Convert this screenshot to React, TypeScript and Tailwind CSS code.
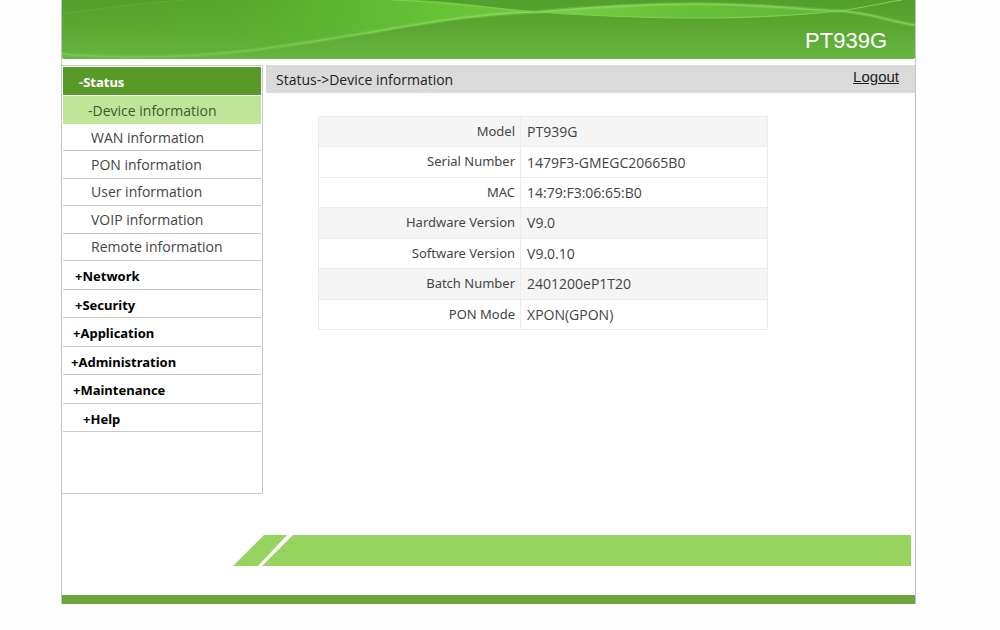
import React from 'react';
import clsx from 'clsx';

type MenuItem = { label: string; indent: string };

const statusPages = ['WAN information', 'PON information', 'User information', 'VOIP information', 'Remote information'];

const sections: MenuItem[] = [
  { label: '+Network', indent: 'pl-3' },
  { label: '+Security', indent: 'pl-3' },
  { label: '+Application', indent: 'pl-2.5' },
  { label: '+Administration', indent: 'pl-2' },
  { label: '+Maintenance', indent: 'pl-2.5' },
  { label: '+Help', indent: 'pl-5' },
];

const deviceInfo = [
  { name: 'Model', value: 'PT939G', shaded: true },
  { name: 'Serial Number', value: '1479F3-GMEGC20665B0', shaded: false },
  { name: 'MAC', value: '14:79:F3:06:65:B0', shaded: false },
  { name: 'Hardware Version', value: 'V9.0', shaded: true },
  { name: 'Software Version', value: 'V9.0.10', shaded: false },
  { name: 'Batch Number', value: '2401200eP1T20', shaded: true },
  { name: 'PON Mode', value: 'XPON(GPON)', shaded: false },
];

const lowerCrest =
  'M0 54 C20 56 45 57 78 57 C160 57 225 46 298 34 C370 22 420 13 475 12 C530 7 580 4 635 4 C705 4 740 10 779 11 C810 13 830 22 853 25';

function HeaderWaves() {
  return (
    <svg className="absolute inset-0 h-full w-full" viewBox="0 0 853 59" preserveAspectRatio="none" aria-hidden="true">
      <defs>
        <linearGradient id="base" x1="0" y1="0" x2="0" y2="1">
          <stop offset="0" stopColor="#539f2b" />
          <stop offset="0.5" stopColor="#5ba732" />
          <stop offset="1" stopColor="#6ab643" />
        </linearGradient>
        <linearGradient id="swell" gradientUnits="userSpaceOnUse" x1="0" y1="0" x2="475" y2="0">
          <stop offset="0" stopColor="#5cb031" stopOpacity="0" />
          <stop offset="0.35" stopColor="#5cb031" stopOpacity="0.4" />
          <stop offset="0.6" stopColor="#60bb34" stopOpacity="0.85" />
          <stop offset="0.8" stopColor="#66c436" />
          <stop offset="1" stopColor="#6fc640" />
        </linearGradient>
        <linearGradient id="lens" x1="0" y1="0" x2="1" y2="0">
          <stop offset="0" stopColor="#78cf48" />
          <stop offset="0.5" stopColor="#66c038" />
          <stop offset="1" stopColor="#64b63a" />
        </linearGradient>
        <linearGradient id="crest" gradientUnits="userSpaceOnUse" x1="0" y1="0" x2="853" y2="0">
          <stop offset="0" stopColor="#7cc755" />
          <stop offset="0.2" stopColor="#75c44c" />
          <stop offset="0.55" stopColor="#88d85b" />
          <stop offset="1" stopColor="#7dcb54" />
        </linearGradient>
      </defs>
      <rect width="853" height="59" fill="url(#base)" />
      <path
        d="M0 14 C45 8 80 3 122 0 H355 C400 2 435 9 475 12 C420 13 370 22 298 34 C225 46 160 57 78 57 C45 57 20 56 0 53 Z"
        fill="url(#swell)"
      />
      <path d="M475 12 C530 7 580 4 635 4 C700 4 745 10 779 11 C735 16 690 18 640 18 C575 18 520 15 475 12 Z" fill="url(#lens)" />
      <path d="M0 14 C45 8 80 3 122 0" fill="none" stroke="#5fac39" strokeWidth="1" />
      <path d={lowerCrest} fill="none" stroke="url(#crest)" strokeOpacity="0.35" strokeWidth="4" />
      <path d={lowerCrest} fill="none" stroke="url(#crest)" strokeWidth="1.5" />
      <path
        d="M330 0 C390 2 435 9 475 12 C520 15 575 18 640 18 C700 18 740 15 779 11 C805 7 825 2 840 0"
        fill="none"
        stroke="#7dcf50"
        strokeWidth="1.2"
      />
    </svg>
  );
}

function Sidebar() {
  return (
    <nav className="h-[429px] w-[201px] shrink-0 border-r border-b border-t border-[#c9c9c9] p-px text-[14px]">
      <button
        type="button"
        className="block h-7 w-full bg-[#589a28] pt-1 pl-4 text-left font-['Noto_Sans',sans-serif] text-[13px] font-bold text-white"
      >
        -Status
      </button>
      <a href="#device" className="mt-px flex h-7 items-center bg-[#bfe599] pl-[25px] text-[#3c5a31]">
        -Device information
      </a>
      <div className="grid h-[137px] auto-rows-fr">
        {statusPages.map((page) => (
          <a key={page} href="#status" className="flex items-center border-b border-[#c9c9c9] pl-7 text-[#444]">
            {page}
          </a>
        ))}
      </div>
      <div className="grid h-[171px] auto-rows-fr font-['Noto_Sans',sans-serif] text-[13px]">
        {sections.map((s) => (
          <button
            key={s.label}
            type="button"
            className={clsx('flex items-center border-b border-[#c9c9c9] pt-1 text-left font-bold text-black', s.indent)}
          >
            {s.label}
          </button>
        ))}
      </div>
    </nav>
  );
}

function DeviceTable() {
  return (
    <table className="mt-[23px] mr-[147px] ml-[52px] h-[214px] w-[calc(100%-199px)] table-fixed border-collapse border border-[#ebebeb] text-[#444]">
      <tbody>
        {deviceInfo.map((row) => (
          <tr key={row.name} className={clsx('border-b border-[#ebebeb]', row.shaded && 'bg-[#f5f5f5]')}>
            <th
              scope="row"
              className="w-[45%] border-r border-[#ebebeb] pr-[5px] text-right font-['Noto_Sans',sans-serif] text-[13px] font-normal"
            >
              {row.name}
            </th>
            <td className="pl-1.5 text-[14px]">{row.value}</td>
          </tr>
        ))}
      </tbody>
    </table>
  );
}

export default function App() {
  return (
    <div className="min-h-screen bg-[#fdfdfd] font-['Open_Sans','Noto_Sans',sans-serif]">
      <div className="mr-[84px] ml-[61px] border-x border-[#c4c4c4] bg-white">
        <header className="relative flex h-[59px] items-end justify-end overflow-hidden rounded-b-xs">
          <HeaderWaves />
          <h1 className="relative pr-7 pb-0.5 font-['Liberation_Sans',Arial,sans-serif] text-[22px] text-white">PT939G</h1>
        </header>
        <div className="mt-1.5 flex">
          <Sidebar />
          <main className="ml-[3px] flex-1">
            <div className="flex h-7 items-center justify-between bg-[#dadada] pr-4 pl-[10px] text-[14px] text-[#222]">
              <span>Status-&gt;Device information</span>
              <a href="#logout" className="pb-1 font-['Liberation_Sans',Arial,sans-serif] text-[15px] underline">
                Logout
              </a>
            </div>
            <DeviceTable />
          </main>
        </div>
        <footer className="pt-[41px]">
          <div className="mr-1 ml-[171px] flex h-[31px]">
            <svg className="h-full w-[60px] shrink-0" viewBox="0 0 60 31" aria-hidden="true">
              <path d="M31 0 H54 L25 31 H0 Z M60 0 L29 31 H60 Z" fill="#96d35f" />
            </svg>
            <div className="flex-1 bg-[#96d35f]" />
          </div>
          <div className="mt-[29px] h-[9px] bg-[#6ba53a]" />
        </footer>
      </div>
    </div>
  );
}
